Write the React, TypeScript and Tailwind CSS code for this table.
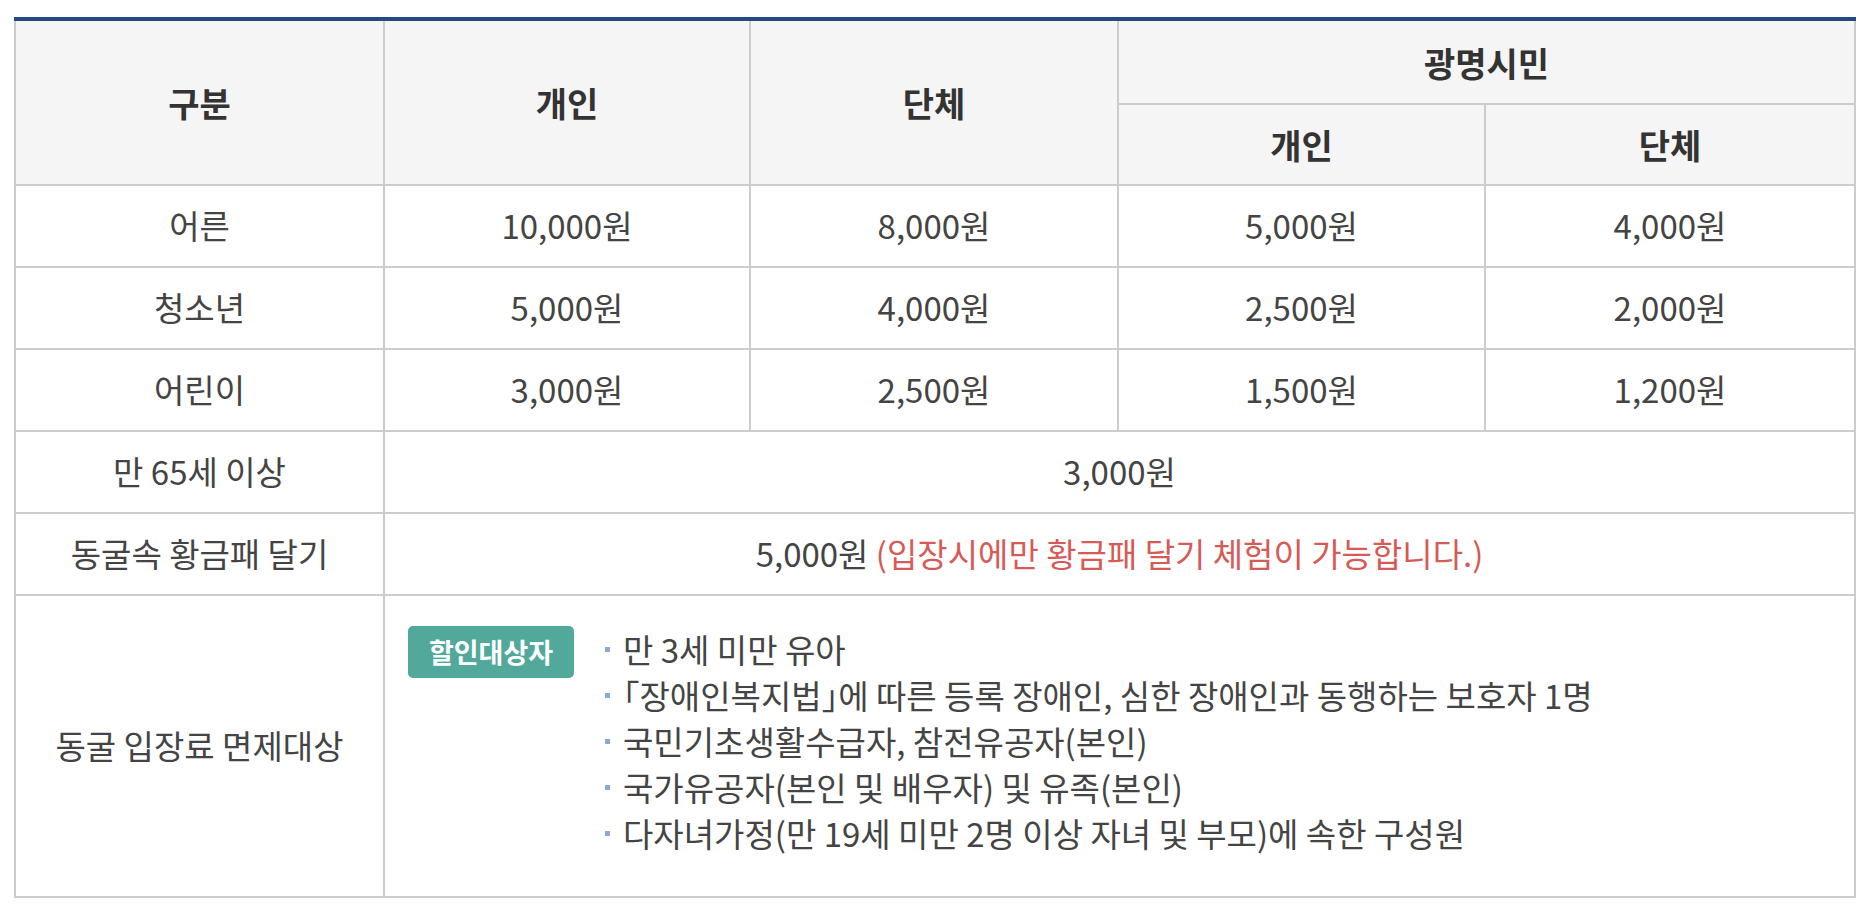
import React from "react";

const font = { fontFamily: '"Noto Sans CJK KR", "Noto Sans", sans-serif' };

const rows = [
  ["어른", "10,000원", "8,000원", "5,000원", "4,000원"],
  ["청소년", "5,000원", "4,000원", "2,500원", "2,000원"],
  ["어린이", "3,000원", "2,500원", "1,500원", "1,200원"],
];

const items = [
  "만 3세 미만 유아",
  "｢장애인복지법｣에 따른 등록 장애인, 심한 장애인과 동행하는 보호자 1명",
  "국민기초생활수급자, 참전유공자(본인)",
  "국가유공자(본인 및 배우자) 및 유족(본인)",
  "다자녀가정(만 19세 미만 2명 이상 자녀 및 부모)에 속한 구성원",
];

export default function App() {
  const th = "border-2 border-[#cccccc] bg-[#f5f5f5] text-[#333333] font-bold text-[34px] text-center align-middle";
  const td = "border-2 border-[#cccccc] text-[#444444] text-[33px] text-center align-middle h-[82px]";
  return (
    <div className="w-[1874px] h-[912px] bg-white pt-[17px] pl-[14px]" style={font}>
      <table className="table-fixed border-collapse w-[1840px] border-t-4 border-t-[#234a85]">
        <colgroup>
          <col className="w-[369px]" />
          <col className="w-[366px]" />
          <col className="w-[368px]" />
          <col className="w-[367px]" />
          <col className="w-[370px]" />
        </colgroup>
        <thead>
          <tr className="h-[85px]">
            <th rowSpan={2} className={th}>구분</th>
            <th rowSpan={2} className={th}>개인</th>
            <th rowSpan={2} className={th}>단체</th>
            <th colSpan={2} className={th}>광명시민</th>
          </tr>
          <tr className="h-[81px]">
            <th className={th}>개인</th>
            <th className={th}>단체</th>
          </tr>
        </thead>
        <tbody>
          {rows.map((r) => (
            <tr key={r[0]}>
              {r.map((c, i) => (
                <td key={i} className={td}>{c}</td>
              ))}
            </tr>
          ))}
          <tr>
            <td className={td}>만 65세 이상</td>
            <td colSpan={4} className={td}>3,000원</td>
          </tr>
          <tr>
            <td className={td}>동굴속 황금패 달기</td>
            <td colSpan={4} className={td}>
              5,000원 <span className="text-[#d65a56]">(입장시에만 황금패 달기 체험이 가능합니다.)</span>
            </td>
          </tr>
          <tr className="h-[302px]">
            <td className="border-2 border-[#cccccc] text-[#444444] text-[33px] text-center align-middle">동굴 입장료 면제대상</td>
            <td colSpan={4} className="border-2 border-[#cccccc] text-[#444444] text-[33px] align-top pt-[30px] pl-[23px]">
              <div className="flex items-start gap-[31px]">
                <div className="flex items-center justify-center w-[166px] h-[52px] bg-[#52a99b] rounded-[5px] text-white font-bold text-[27px] shrink-0">
                  할인대상자
                </div>
                <ul className="flex flex-col">
                  {items.map((t, i) => (
                    <li key={i} className="flex items-center h-[46px] leading-[46px]">
                      <span className="w-[5px] h-[5px] bg-[#8aa9d6] mr-[13px] shrink-0" />
                      <span className="whitespace-nowrap">{t}</span>
                    </li>
                  ))}
                </ul>
              </div>
            </td>
          </tr>
        </tbody>
      </table>
    </div>
  );
}
